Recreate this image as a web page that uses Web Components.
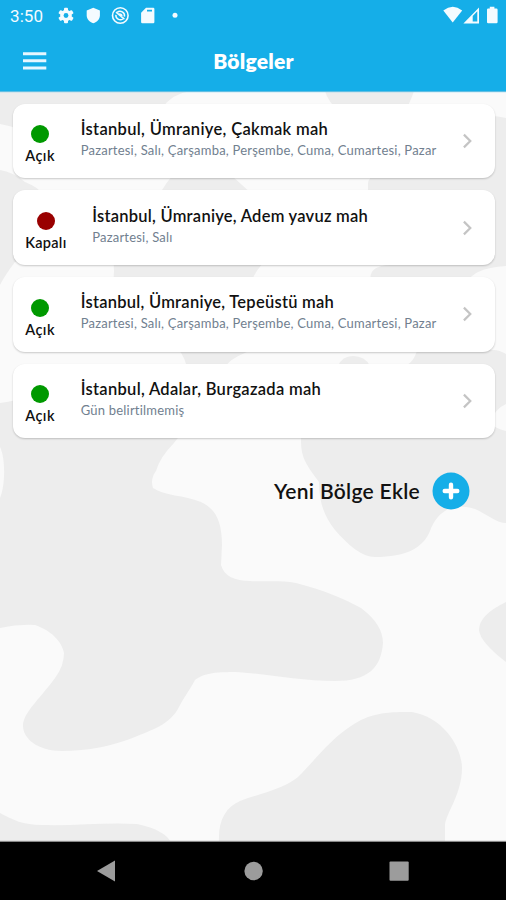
<!DOCTYPE html>
<html lang="tr">
<head>
<meta charset="utf-8">
<title>Bölgeler</title>
<style>
html, body { margin: 0; height: 100%; }
body { font-family: Lato, "Open Sans", sans-serif; overflow: hidden; }
</style>
</head>
<body>
<regions-screen></regions-screen>
<script>
function define(name, html, init) {
  const template = document.createElement('template');
  template.innerHTML = html;
  customElements.define(name, class extends HTMLElement {
    connectedCallback() {
      if (this.shadowRoot) return;
      this.attachShadow({ mode: 'open' }).append(template.content.cloneNode(true));
      if (init) init(this);
    }
  });
}

define('status-bar', `
<style>
:host { display: flex; height: 32px; box-sizing: border-box; background: #15aee8; color: #f4fbff; }
.time { font: 400 17px/32px Roboto, sans-serif; padding-left: 10px; width: 34px; letter-spacing: .1px; }
svg { display: block; width: 462px; height: 32px; flex: none; }
</style>
<span class="time">3:50</span>
<svg viewBox="44 0 462 32" fill="#f4fbff">
  <g transform="translate(66 15.5)">
    <g><rect x="-2" y="-7.8" width="4" height="15.6" rx="1"/><rect x="-2" y="-7.8" width="4" height="15.6" rx="1" transform="rotate(60)"/><rect x="-2" y="-7.8" width="4" height="15.6" rx="1" transform="rotate(120)"/></g>
    <circle r="5.8"/><circle r="2.4" fill="#15aee8"/>
  </g>
  <path d="M93.3 7.8l6.6 2.8v4.6c0 3.8-2.8 7-6.6 8-3.8-1-6.6-4.2-6.6-8v-4.6z"/>
  <g fill="none" stroke="#f4fbff"><circle cx="120.3" cy="15.5" r="7.8" stroke-width="1.6"/><path d="M117.2 12.4a4.4 4.4 0 0 1 7.2 4.2M115.9 14.8a4.5 4.5 0 0 0 7 4.2" stroke-width="1.5"/><path d="M116 12.2l8.4 7M119 14.2q2.4-.6 3 1.8" stroke-width="1.5"/></g>
  <path fill-rule="evenodd" d="M146 7.8h7.2q1.2 0 1.2 1.2v13q0 1.2-1.2 1.2h-10.9q-1.2 0-1.2-1.2v-9.3zM147 9.8v1.6h5v-1.6z"/>
  <circle cx="175" cy="15.3" r="2.5"/>
  <path d="M452.7 22.6L443.3 10.4q9.6-7.2 18.9 0z"/>
  <path fill-rule="evenodd" d="M463.4 23.4L479 7.5v15.9zM472.7 16v5.6h4.6v-10.3z"/>
  <path d="M489.8 6.8h4.6v1.7h2q1.2 0 1.2 1.2v12.4q0 1.2-1.2 1.2h-8.2q-1.2 0-1.2-1.2v-12.4q0-1.2 1.2-1.2h1.6z"/>
</svg>`);

define('title-bar', `
<style>
:host { display: grid; grid-template-columns: 70px 1fr 70px; align-items: center; height: 59px; box-sizing: border-box; padding-bottom: 2px;
  background: #15aee8; color: #fff; box-shadow: 0 1px 1px #62bfe3; position: relative; }
svg { width: 24px; height: 18px; margin-left: 23px; display: block; }
h1 { margin: 0; text-align: center; font-size: 21px; line-height: 26px; font-weight: 800; letter-spacing: .25px; padding: 1px 0 0 1px; }
</style>
<svg viewBox="0 0 24 18" fill="#e6f7ff"><path d="M0 .2h23.3v3H0zM0 7.3h23.3v3H0zM0 14.4h23.3v3H0z"/></svg>
<h1><slot></slot></h1>`);

define('camo-backdrop', `
<style>
:host { display: block; }
svg { display: block; width: 100%; height: 100%; }
</style>
<svg viewBox="0 91 506 751" preserveAspectRatio="none">
  <rect y="91" width="506" height="751" fill="#fafafa"/>
  <g fill="#ededed">
    <path d="M0 91H190Q172 94 162 108Q130 140 20 130Q12 126 0 124Z"/>
    <path d="M325 91H414Q411 100 405 112H340Q328 102 325 91Z"/>
    <path d="M506 118Q498 116 490 116L380 170Q368 177 368 184V190Q380 200 380 230L390 265Q365 266 372 285H465Q472 268 506 266Z"/>
    <path d="M0 170Q13 172 25 182Q40 188 43 195L162 190Q167 182 172 176H232Q240 183 253 195L290 240Q256 265 252 281H113Q115 272 113 260L15 262Q5 275 0 285Z"/>
    <path d="M179 350H252Q226 360 226 368H187Q185 358 179 350ZM338 366Q342 356 353 356Q365 356 370 366ZM417 350H494Q499 350 506 354V404Q497 408 490 420Q490 427 506 431V523C497 523 488 515 475 509C464 506 455 506 450 508C440 513 434 520 430 531C423 548 406 557 375 557C362 557 348 545 335 530C324 516 319 502 319 482C306 464 301 458 301 440V420H400V368Q414 364 417 350Z"/>
    <path d="M0 403Q8 402 16 400L200 415Q185 428 174 443Q160 457 156 471Q150 479 153 488C164 496 184 495 201 502C216 509 222 522 222 545L221 565C224 576 235 581 250 581C265 582 280 580 296 583C323 590 345 599 361 608C376 619 383 631 383 643C381 668 368 681 335 681C299 681 260 673 235 672C208 672 202 675 195 680C188 693 184 697 179 707C170 725 151 730 135 737C112 746 88 751 62 751C37 751 23 738 23 726C23 713 38 701 55 678Q64 666 64 653C62 641 50 630 35 625Q18 624 0 628V498C5 487 6 459 0 447Z"/>
    <path d="M506 602Q479 615 479 630Q480 642 506 662Z"/>
    <path d="M219 842C218 820 226 807 240 801C264 792 289 788 302 773C322 752 332 738 354 724C373 712 390 712 412 712C443 717 462 747 462 768C462 795 445 814 445 826V842Z"/>
    <path d="M0 813C13 820 23 825 42 825C76 826 106 822 137 824C157 828 167 835 171 842H0Z"/>
  </g>
</svg>`);

define('region-card', `
<style>
:host { display: flex; box-sizing: border-box; height: 74.4px; background: #fff; border-radius: 12px; padding: 0 14.5px 0 12.6px;
  box-shadow: 0 1px 2px rgba(0,0,0,.2); }
.state { display: flex; flex-direction: column; align-items: center; padding-top: 21.5px; flex: none; width: var(--state-width, 30px); }
.dot { width: 18px; height: 18px; border-radius: 50%; background: var(--dot, #090); }
.label { font-size: 14.5px; line-height: 18px; font-weight: 600; color: #111; margin-top: 4px; white-space: nowrap; letter-spacing: var(--label-spacing, .5px); }
.info { flex: 1; padding: 15.2px 0 0 25.6px; white-space: nowrap; min-width: 0; }
.name { font-size: 16.5px; line-height: 20px; font-weight: 600; color: #111; letter-spacing: var(--name-spacing, .32px); }
.days { font-size: 13px; line-height: 18px; font-weight: 400; color: #71808f; letter-spacing: .21px; margin-top: 2px; }
svg { width: 17px; height: 18px; align-self: center; flex: none; }
</style>
<div class="state"><span class="dot"></span><span class="label"><slot name="state"></slot></span></div>
<div class="info"><div class="name"><slot name="name"></slot></div><div class="days"><slot name="days"></slot></div></div>
<svg viewBox="0 0 17 18" fill="none" stroke="#c4c4c4" stroke-width="2.2"><path d="M.9 2.6l6.4 6.4-6.4 6.4"/></svg>`);

define('add-button', `
<style>
:host { display: flex; align-items: center; justify-content: flex-end; gap: 12px; padding-right: 36px; height: 38px; }
span { font-size: 21px; line-height: 26px; font-weight: 600; color: #111; letter-spacing: .3px; margin-top: 1px; }
svg { width: 38px; height: 38px; display: block; }
</style>
<span><slot></slot></span>
<svg viewBox="0 0 38 38"><circle cx="19" cy="19" r="18.5" fill="#15aee8"/><path d="M19 12.7v12.6M12.7 19h12.6" stroke="#fff" stroke-width="4.4" stroke-linecap="round"/></svg>`);

define('nav-bar', `
<style>
:host { display: block; height: 58px; background: #000; box-shadow: 0 -1px 1px #888; position: relative; }
svg { display: block; width: 506px; height: 58px; }
</style>
<svg viewBox="0 842 506 58" fill="#9c9c9c"><path d="M97 871l18-10.5v21z"/><circle cx="253.6" cy="871" r="9.2"/><rect x="389.5" y="861.5" width="19.2" height="19.2" rx="1"/></svg>`);

define('regions-screen', `
<style>
:host { display: grid; grid-template-rows: 32px 59px 751px 58px; width: 506px; height: 900px; }
main { display: grid; overflow: hidden; }
main > * { grid-area: 1 / 1; }
.content { display: flex; flex-direction: column; gap: 12.3px; padding: 12.8px 11.5px 0 12.5px; }
.closed { --dot: #900; --state-width: 41.5px; --label-spacing: .3px; --name-spacing: .25px; }
.third { --name-spacing: .25px; }
.fourth { --name-spacing: .3px; }
add-button { margin: 21px -11.5px 0 0; }
</style>
<status-bar></status-bar>
<title-bar>Bölgeler</title-bar>
<main>
  <camo-backdrop></camo-backdrop>
  <div class="content">
    <region-card><span slot="state">Açık</span><span slot="name">İstanbul, Ümraniye, Çakmak mah</span><span slot="days">Pazartesi, Salı, Çarşamba, Perşembe, Cuma, Cumartesi, Pazar</span></region-card>
    <region-card class="closed"><span slot="state">Kapalı</span><span slot="name">İstanbul, Ümraniye, Adem yavuz mah</span><span slot="days">Pazartesi, Salı</span></region-card>
    <region-card class="third"><span slot="state">Açık</span><span slot="name">İstanbul, Ümraniye, Tepeüstü mah</span><span slot="days">Pazartesi, Salı, Çarşamba, Perşembe, Cuma, Cumartesi, Pazar</span></region-card>
    <region-card class="fourth"><span slot="state">Açık</span><span slot="name">İstanbul, Adalar, Burgazada mah</span><span slot="days">Gün belirtilmemiş</span></region-card>
    <add-button>Yeni Bölge Ekle</add-button>
  </div>
</main>
<nav-bar></nav-bar>`);
</script>
</body>
</html>
